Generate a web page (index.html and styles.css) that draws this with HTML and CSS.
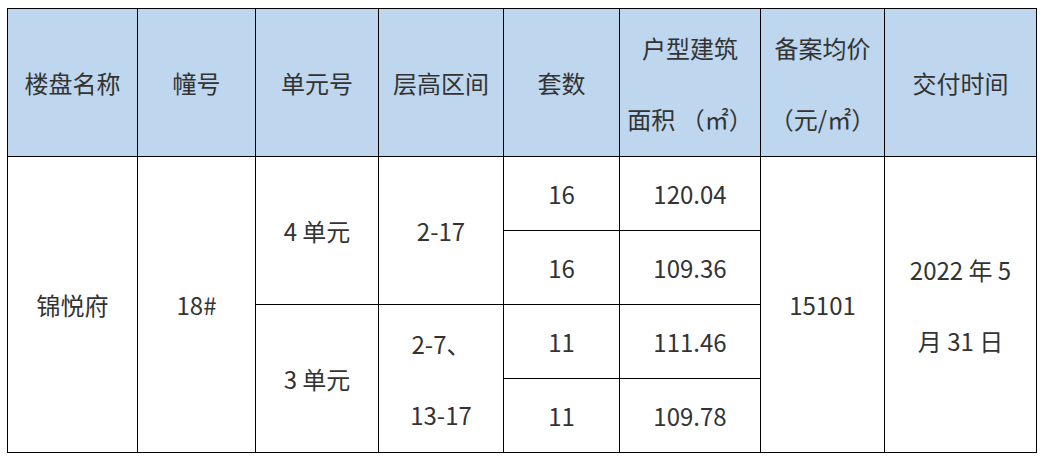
FILE: index.html
```html
<!DOCTYPE html>
<html lang="zh-CN">
<head>
<meta charset="utf-8">
<link rel="stylesheet" href="styles.css">
</head>
<body>
<div class="wrap">
<table class="sheet">
  <colgroup>
    <col class="c1"><col class="c2"><col class="c3"><col class="c4">
    <col class="c5"><col class="c6"><col class="c7"><col class="c8">
  </colgroup>
  <thead>
    <tr class="head">
      <th>楼盘名称</th>
      <th>幢号</th>
      <th>单元号</th>
      <th>层高区间</th>
      <th>套数</th>
      <th class="two">户型建筑<br>面积 （㎡）</th>
      <th class="two">备案均价<br>（元/㎡）</th>
      <th>交付时间</th>
    </tr>
  </thead>
  <tbody>
    <tr class="row">
      <td rowspan="4">锦悦府</td>
      <td rowspan="4">18#</td>
      <td rowspan="2">4 单元</td>
      <td rowspan="2">2-17</td>
      <td>16</td>
      <td>120.04</td>
      <td rowspan="4">15101</td>
      <td rowspan="4" class="two">2022 年 5<br>月 31 日</td>
    </tr>
    <tr class="row">
      <td>16</td>
      <td>109.36</td>
    </tr>
    <tr class="row">
      <td rowspan="2">3 单元</td>
      <td rowspan="2" class="two">2-7、<br>13-17</td>
      <td>11</td>
      <td>111.46</td>
    </tr>
    <tr class="row">
      <td>11</td>
      <td>109.78</td>
    </tr>
  </tbody>
</table>
</div>
</body>
</html>
```

FILE: styles.css
```css
html, body {
  margin: 0;
  padding: 0;
  background: #ffffff;
}
.wrap {
  padding: 8px 0 0 7px;
}
.sheet {
  border-collapse: collapse;
  table-layout: fixed;
  width: 1029px;
  font-family: "Noto Sans CJK SC", "Noto Sans", sans-serif;
  font-size: 24px;
  color: #333333;
}
.c1 { width: 130px; }
.c2 { width: 118px; }
.c3 { width: 123px; }
.c4 { width: 125px; }
.c5 { width: 116px; }
.c6 { width: 141px; }
.c7 { width: 124px; }
.c8 { width: 152px; }
.sheet th, .sheet td {
  border: 1px solid #000000;
  text-align: center;
  vertical-align: middle;
  padding: 0;
  font-weight: 400;
  line-height: 30px;
}
.head th {
  background: #bed6ee;
  height: 147px;
}
.row td {
  height: 73px;
}
.sheet .two {
  line-height: 71px;
}
```
